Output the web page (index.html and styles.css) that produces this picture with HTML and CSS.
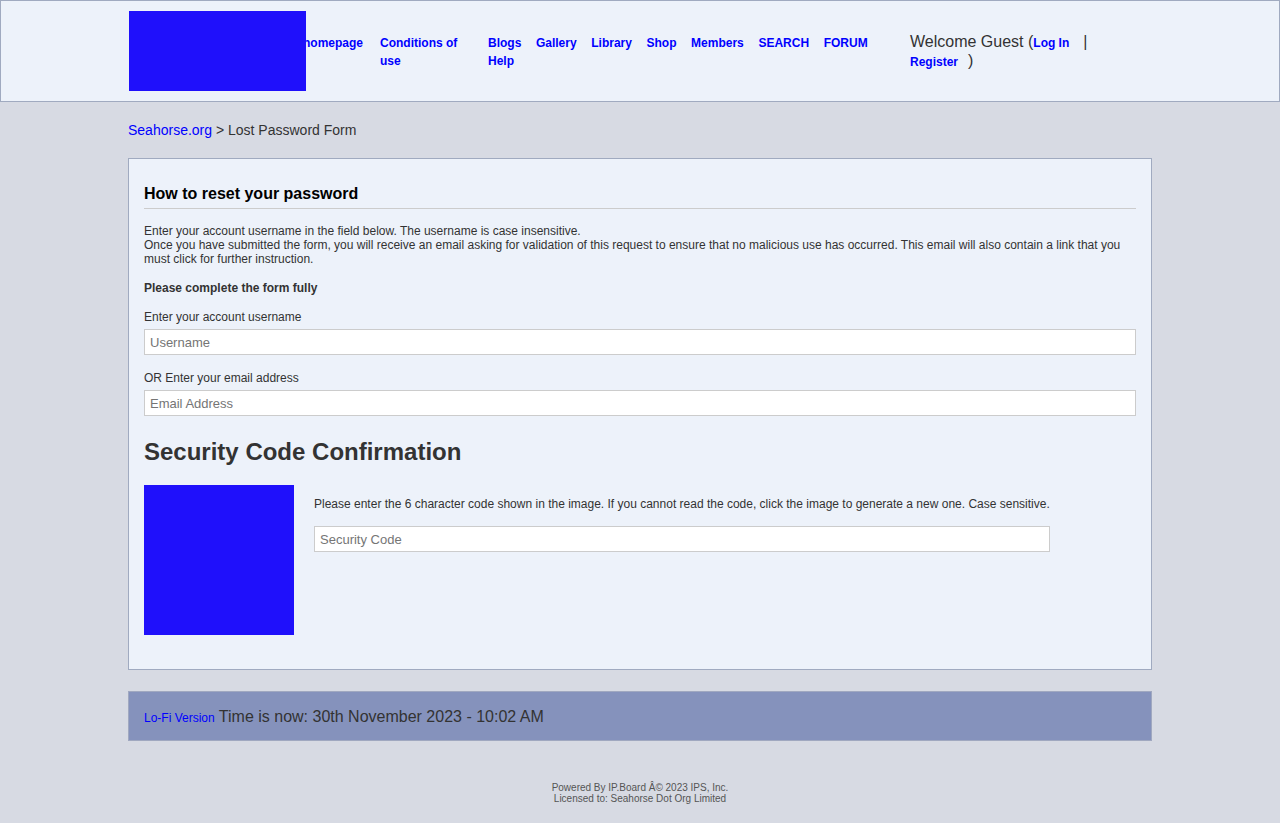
FILE: index.html
```html
<!DOCTYPE html>
<html lang="en">
<head>
<meta charset="utf-8">
<title>Lost Password Form</title>
<link rel="stylesheet" href="styles.css">
</head>
<body>
<header class="site-header">
  <div class="header-inner">
    <a class="logo" href="#" aria-label="Seahorse.org"></a>
    <nav class="nav">
      <div class="nav-col nav-col1"><a href="#">homepage</a></div>
      <div class="nav-col nav-col2"><a href="#">Conditions of use</a></div>
      <div class="nav-col nav-col3">
        <a href="#">Blogs</a><a href="#">Gallery</a><a href="#">Library</a><a href="#">Shop</a><a href="#">Members</a><a href="#">SEARCH</a><a href="#">FORUM</a><a href="#">Help</a>
      </div>
    </nav>
    <div class="welcome">Welcome Guest (<a class="login" href="#">Log In</a>|<br><a class="register" href="#">Register</a>)</div>
  </div>
</header>

<main class="wrap">
  <div class="breadcrumb"><a href="#">Seahorse.org</a> &gt; Lost Password Form</div>

  <section class="box">
    <h2 class="box-title">How to reset your password</h2>
    <p class="intro">Enter your account username in the field below. The username is case insensitive.<br>Once you have submitted the form, you will receive an email asking for validation of this request to ensure that no malicious use has occurred. This email will also contain a link that you must click for further instruction.</p>
    <p class="strong">Please complete the form fully</p>
    <label class="field-label" for="username">Enter your account username</label>
    <input class="text-input" id="username" type="text" placeholder="Username">
    <label class="field-label label-gap" for="email">OR Enter your email address</label>
    <input class="text-input" id="email" type="text" placeholder="Email Address">

    <h3 class="sec-title">Security Code Confirmation</h3>
    <div class="captcha-row">
      <div class="captcha-img"></div>
      <div class="captcha-body">
        <p class="captcha-text">Please enter the 6 character code shown in the image. If you cannot read the code, click the image to generate a new one. Case sensitive.</p>
        <input class="text-input captcha-input" type="text" placeholder="Security Code">
      </div>
    </div>
  </section>

  <div class="footer-bar"><a class="lofi" href="#">Lo-Fi Version</a> Time is now: 30th November 2023 - 10:02 AM</div>

  <div class="copyright">Powered By IP.Board Â© 2023 IPS, Inc.<br>Licensed to: Seahorse Dot Org Limited</div>
</main>
</body>
</html>
```
FILE: styles.css
```css
* { box-sizing: border-box; }
html, body { margin: 0; padding: 0; }
body {
  background: #d7dae3;
  font-family: "Liberation Sans", Arial, sans-serif;
  color: #333;
  font-size: 12px;
  min-height: 823px;
}
a { color: #0000ff; text-decoration: none; }

.site-header {
  background: #edf2fa;
  border: 1px solid #a0aac0;
  height: 102px;
}
.header-inner {
  width: 1024px;
  margin: 0 auto;
  display: flex;
  align-items: center;
  height: 100px;
}
.logo {
  display: block;
  width: 177px;
  height: 80px;
  background: #1f10fb;
  margin-left: 1px;
  margin-right: -3px;
  position: relative;
  z-index: 1;
  flex: none;
}
.nav {
  display: flex;
  align-items: flex-start;
  font-weight: bold;
  font-size: 12px;
  line-height: 18px;
  margin-top: 2px;
}
.nav a { color: #0000ff; }
.nav-col1 { width: 77px; flex: none; }
.nav-col2 { width: 108px; flex: none; padding-right: 28px; }
.nav-col3 {
  width: 400px;
  flex: none;
  display: flex;
  flex-wrap: wrap;
  column-gap: 14.6px;
}
.welcome {
  margin-left: 22px;
  margin-top: 1px;
  width: 200px;
  font-size: 16px;
  line-height: 18px;
  color: #333;
}
.welcome a { font-size: 12px; font-weight: bold; }
.welcome .login { margin-right: 14px; }
.welcome .register { margin-right: 10px; }

.wrap {
  width: 1024px;
  margin: 0 auto;
  padding-top: 20px;
}
.breadcrumb {
  font-size: 14px;
  line-height: 16px;
  color: #333;
}
.box {
  margin-top: 20px;
  background: #edf2fa;
  border: 1px solid #a0aac0;
  padding: 15px 15px 34px;
}
.box-title {
  margin: 10px 0 0;
  padding-bottom: 4px;
  font-size: 16px;
  line-height: 20px;
  color: #000;
  border-bottom: 1px solid #cccccc;
}
.intro {
  margin: 15px 0 0;
  font-size: 12px;
  line-height: 14px;
}
.strong {
  margin: 15px 0 0;
  font-weight: bold;
  line-height: 14px;
}
.field-label {
  display: block;
  margin-top: 15px;
  line-height: 14px;
}
.label-gap { margin-top: 16px; }
.text-input {
  display: block;
  width: 100%;
  height: 26px;
  margin-top: 5px;
  border: 1px solid #cccccc;
  background: #fff;
  padding: 0 5px;
  font-family: "Liberation Sans", Arial, sans-serif;
  font-size: 13px;
  color: #333;
  outline: none;
}
.text-input::placeholder { color: #757575; }
.sec-title {
  margin: 22px 0 0;
  font-size: 24px;
  line-height: 28px;
  font-weight: bold;
  color: #333;
}
.captcha-row {
  display: flex;
  margin-top: 19px;
}
.captcha-img {
  width: 150px;
  height: 150px;
  background: #1f10fb;
  flex: none;
}
.captcha-body {
  margin-left: 20px;
  width: 736px;
  padding-top: 12px;
}
.captcha-text {
  margin: 0;
  line-height: 14px;
}
.captcha-input { margin-top: 15px; }

.footer-bar {
  margin-top: 21px;
  height: 50px;
  background: #8592bc;
  border: 1px solid #a0a8c0;
  padding: 2px 15px 0;
  display: flex;
  align-items: center;
  font-size: 16px;
  color: #333;
  white-space: pre;
}
.footer-bar .lofi { font-size: 12px; padding-top: 1px; }
.copyright {
  margin-top: 41px;
  text-align: center;
  font-size: 10px;
  line-height: 11px;
  color: #555;
}
```
